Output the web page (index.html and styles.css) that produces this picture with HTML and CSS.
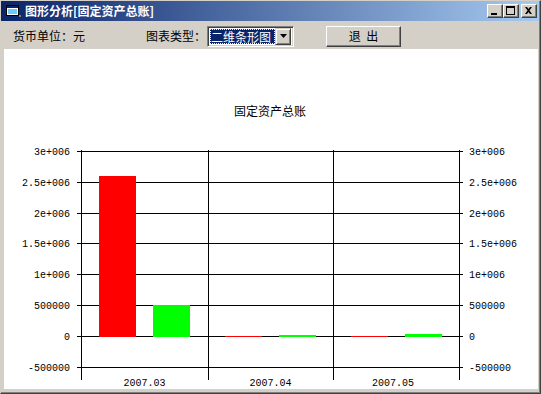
FILE: index.html
```html
<!DOCTYPE html>
<html lang="zh-CN">
<head>
    <meta charset="UTF-8">
    <title>图形分析[固定资产总账]</title>
    <link rel="stylesheet" href="styles.css">
</head>
<body>
    <div class="window">
        <div class="titlebar">
            <svg class="app-icon" width="16" height="16" viewBox="0 0 16 16">
                <rect x="1.5" y="2.5" width="12" height="10" fill="#fff" stroke="#000"/>
                <rect x="2" y="3" width="11" height="2" fill="#0a246a"/>
                <rect x="3" y="6" width="9" height="5" fill="#6cf"/>
                <rect x="14" y="12" width="2" height="2" fill="#808080"/>
            </svg>
            <span class="title-text">图形分析[固定资产总账]</span>
            <div class="caption-buttons">
                <span class="cap-btn">
                    <svg width="14" height="12" viewBox="0 0 14 12"><rect x="3" y="8" width="6" height="2" fill="#000"/></svg>
                </span>
                <span class="cap-btn">
                    <svg width="14" height="12" viewBox="0 0 14 12"><rect x="2.5" y="1.5" width="8" height="8" fill="none" stroke="#000"/><rect x="2" y="1" width="9" height="2" fill="#000"/></svg>
                </span>
                <span class="cap-btn close">
                    <svg width="14" height="12" viewBox="0 0 14 12"><path d="M3 2h2l1.5 2 1.5-2h2l-2.5 3.5 2.5 3.5h-2l-1.5-2-1.5 2h-2l2.5-3.5z" fill="#000"/></svg>
                </span>
            </div>
        </div>

        <div class="toolbar">
            <span class="label unit">货币单位：元</span>
            <span class="label type">图表类型：</span>
            <div class="combo">
                <span class="combo-text">二维条形图</span>
                <span class="combo-arrow">
                    <svg width="7" height="4" viewBox="0 0 7 4"><path d="M0 0h7L3.5 4z" fill="#000"/></svg>
                </span>
            </div>
            <button class="btn-exit">退&nbsp;&nbsp;出</button>
        </div>

        <div class="client">
            <svg class="chart" width="533" height="340" viewBox="4 49 533 340">
                <text class="chart-title" x="270" y="116" text-anchor="middle">固定资产总账</text>

                <g class="grid" stroke="#000" stroke-width="1">
                    <line x1="77" y1="151.5" x2="463" y2="151.5"/>
                    <line x1="77" y1="182.5" x2="463" y2="182.5"/>
                    <line x1="77" y1="213.5" x2="463" y2="213.5"/>
                    <line x1="77" y1="243.5" x2="463" y2="243.5"/>
                    <line x1="77" y1="274.5" x2="463" y2="274.5"/>
                    <line x1="77" y1="305.5" x2="463" y2="305.5"/>
                    <line x1="77" y1="336.5" x2="463" y2="336.5"/>
                    <line x1="77" y1="367.5" x2="463" y2="367.5"/>
                    <line x1="81.5" y1="150" x2="81.5" y2="380"/>
                    <line x1="208.5" y1="150" x2="208.5" y2="380"/>
                    <line x1="333.5" y1="150" x2="333.5" y2="380"/>
                    <line x1="459.5" y1="150" x2="459.5" y2="380"/>
                </g>

                <g class="bars">
                    <rect x="99" y="176" width="37" height="161" fill="#ff0000"/>
                    <rect x="153" y="305" width="37" height="32" fill="#00ff00"/>
                    <rect x="225" y="336" width="37" height="1" fill="#ff0000"/>
                    <rect x="279" y="335" width="37" height="2" fill="#00ff00"/>
                    <rect x="351" y="336" width="37" height="1" fill="#ff0000"/>
                    <rect x="405" y="334" width="37" height="3" fill="#00ff00"/>
                </g>

                <g class="axis-label" text-anchor="end">
                    <text x="70" y="155">3e+006</text>
                    <text x="70" y="186">2.5e+006</text>
                    <text x="70" y="217">2e+006</text>
                    <text x="70" y="247">1.5e+006</text>
                    <text x="70" y="278">1e+006</text>
                    <text x="70" y="309">500000</text>
                    <text x="70" y="340">0</text>
                    <text x="70" y="371">-500000</text>
                </g>
                <g class="axis-label" text-anchor="start">
                    <text x="469" y="155">3e+006</text>
                    <text x="469" y="186">2.5e+006</text>
                    <text x="469" y="217">2e+006</text>
                    <text x="469" y="247">1.5e+006</text>
                    <text x="469" y="278">1e+006</text>
                    <text x="469" y="309">500000</text>
                    <text x="469" y="340">0</text>
                    <text x="469" y="371">-500000</text>
                </g>
                <g class="axis-label" text-anchor="middle">
                    <text x="144.5" y="386">2007.03</text>
                    <text x="270.5" y="386">2007.04</text>
                    <text x="393" y="386">2007.05</text>
                </g>
            </svg>
        </div>
    </div>
</body>
</html>
```

FILE: styles.css
```css
body {
    margin: 0;
    overflow: hidden;
    background: #d4d0c8;
    font-family: "Noto Sans CJK SC", "Liberation Sans", sans-serif;
    font-size: 12px;
}
.window {
    box-sizing: border-box;
    width: 541px;
    height: 394px;
    display: flex;
    flex-direction: column;
    background: #d4d0c8;
    border: 1px solid;
    border-color: #d4d0c8 #404040 #404040 #d4d0c8;
    padding: 0 1px 1px 0;
    box-shadow: inset -1px -1px #808080;
}
.titlebar {
    height: 20px;
    display: flex;
    align-items: center;
    padding-left: 4px;
    background: linear-gradient(to right, #0a246a, #a6caf0);
    color: #fff;
}
.app-icon {
    flex: none;
}
.title-text {
    margin-left: 4px;
    font-weight: bold;
    font-size: 12px;
    line-height: 14px;
}
.caption-buttons {
    margin-left: auto;
    margin-right: 2px;
    display: flex;
}
.cap-btn {
    box-sizing: border-box;
    width: 16px;
    height: 14px;
    display: flex;
    align-items: center;
    justify-content: center;
    background: #d4d0c8;
    border: 1px solid;
    border-color: #fff #404040 #404040 #fff;
    box-shadow: inset -1px -1px #808080;
}
.cap-btn.close {
    margin-left: 2px;
}
.toolbar {
    box-sizing: border-box;
    height: 28px;
    display: flex;
    align-items: center;
    padding: 2px 0 0 12px;
}
.label {
    color: #000;
    line-height: 16px;
}
.type {
    margin-left: 61px;
}
.combo {
    box-sizing: border-box;
    width: 87px;
    height: 21px;
    margin-left: 1px;
    display: flex;
    align-items: center;
    padding: 0 2px;
    background: #fff;
    border: 1px solid;
    border-color: #808080 #fff #fff #808080;
    box-shadow: inset 1px 1px #404040, inset -1px -1px #d4d0c8;
}
.combo-text {
    box-sizing: border-box;
    width: 67px;
    height: 15px;
    line-height: 15px;
    padding-left: 1px;
    background: #0a246a;
    color: #fff;
    outline: 1px dotted #ffff80;
    outline-offset: -1px;
    white-space: nowrap;
}
.combo-arrow {
    box-sizing: border-box;
    width: 16px;
    height: 17px;
    margin-left: auto;
    display: flex;
    align-items: center;
    justify-content: center;
    background: #d4d0c8;
    border: 1px solid;
    border-color: #d4d0c8 #404040 #404040 #d4d0c8;
    box-shadow: inset 1px 1px #fff, inset -1px -1px #808080;
}
.btn-exit {
    box-sizing: border-box;
    width: 75px;
    height: 21px;
    margin-left: 32px;
    padding: 0;
    font-family: "Noto Sans CJK SC", sans-serif;
    font-size: 12px;
    line-height: 16px;
    color: #000;
    background: #d4d0c8;
    border: 1px solid;
    border-color: #fff #404040 #404040 #fff;
    box-shadow: inset -1px -1px #808080;
}
.client {
    height: 340px;
    margin: 0 1px 3px 3px;
    background: #fff;
}
.chart {
    display: block;
}
.chart-title {
    font-family: "Noto Sans CJK SC", sans-serif;
    font-size: 12px;
    fill: #000;
}
.axis-label {
    font-family: "Liberation Mono", monospace;
    font-size: 10px;
    fill: #000;
}
```
